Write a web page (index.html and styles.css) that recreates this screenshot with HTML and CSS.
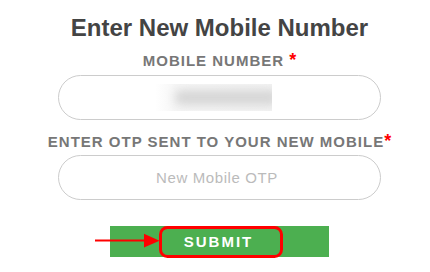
FILE: index.html
```html
<!DOCTYPE html>
<html lang="en">
<head>
<meta charset="utf-8">
<title>Enter New Mobile Number</title>
<link rel="stylesheet" href="styles.css">
</head>
<body>
<div class="page">
  <h1 class="title">Enter New Mobile Number</h1>

  <label class="label label-first">MOBILE NUMBER <span class="req">*</span></label>
  <div class="field">
    <span class="masked"><span class="masked-blob"></span></span>
  </div>

  <label class="label label-second">ENTER OTP SENT TO YOUR NEW MOBILE<span class="req">*</span></label>
  <div class="field">
    <input class="field-input" type="text" placeholder="New Mobile OTP">
  </div>

  <div class="submit-row">
    <button class="submit" type="button">SUBMIT</button>
    <svg class="annotation" width="190" height="36" viewBox="0 0 190 36" aria-hidden="true">
      <line x1="0" y1="16.5" x2="51" y2="16.5" stroke="#ff0000" stroke-width="2.2"/>
      <polygon points="49,9.8 49,23.6 64.5,16.7" fill="#ff0000"/>
      <rect x="65.5" y="3.5" width="121" height="29" rx="7" ry="7" fill="none" stroke="#ff0000" stroke-width="3"/>
    </svg>
  </div>
</div>
</body>
</html>
```

FILE: styles.css
```css
html, body {
  margin: 0;
  padding: 0;
  background: #ffffff;
}

body {
  font-family: "Liberation Sans", Arial, sans-serif;
  width: 430px;
  height: 272px;
  overflow: hidden;
}

.page {
  padding-left: 9px;
  display: flex;
  flex-direction: column;
  align-items: center;
  text-align: center;
}

.title {
  margin: 14px 0 0;
  font-size: 24px;
  line-height: 28px;
  font-weight: bold;
  color: #444444;
}

.label {
  display: block;
  font-size: 15px;
  line-height: 17px;
  height: 17px;
  font-weight: bold;
  letter-spacing: 1px;
  color: #777777;
  white-space: nowrap;
}

.label-first {
  margin-top: 10px;
}

.label-second {
  margin-top: 13px;
}

.req {
  color: #ff0000;
  font-size: 18px;
  line-height: 17px;
  letter-spacing: 0;
}

.field {
  box-sizing: border-box;
  width: 323px;
  height: 45px;
  margin-top: 6px;
  border: 1px solid #cccccc;
  border-radius: 23px;
  background: #ffffff;
  display: flex;
  align-items: center;
  justify-content: center;
  overflow: hidden;
}

.label-second + .field {
  margin-top: 5px;
}

.masked {
  position: relative;
  display: block;
  width: 117px;
  height: 27px;
  margin-right: 12px;
  overflow: hidden;
  background: linear-gradient(to right, #ffffff 0%, #f6f6f6 18%, #f3f3f3 100%);
}

.masked-blob {
  position: absolute;
  left: 20px;
  right: -6px;
  top: 6px;
  bottom: 6px;
  border-radius: 6px;
  background: #d6d6d6;
  filter: blur(5px);
}

.field-input {
  width: 100%;
  height: 100%;
  border: 0;
  outline: none;
  background: transparent;
  padding: 0 5px 0 0;
  font-family: "Liberation Sans", Arial, sans-serif;
  font-size: 15px;
  letter-spacing: 0.6px;
  text-align: center;
  color: #555555;
}

.field-input::placeholder {
  color: #bbbbbb;
  opacity: 1;
}

.submit-row {
  position: relative;
  margin-top: 26px;
  width: 219px;
  height: 31px;
}

.submit {
  display: block;
  width: 100%;
  height: 100%;
  border: 0;
  padding: 0 2px 0 0;
  margin: 0;
  background: #4caf50;
  color: #ffffff;
  font-family: "Liberation Sans", Arial, sans-serif;
  font-size: 15px;
  font-weight: bold;
  letter-spacing: 2px;
}

.annotation {
  position: absolute;
  left: -15px;
  top: -2px;
  overflow: visible;
}
```
